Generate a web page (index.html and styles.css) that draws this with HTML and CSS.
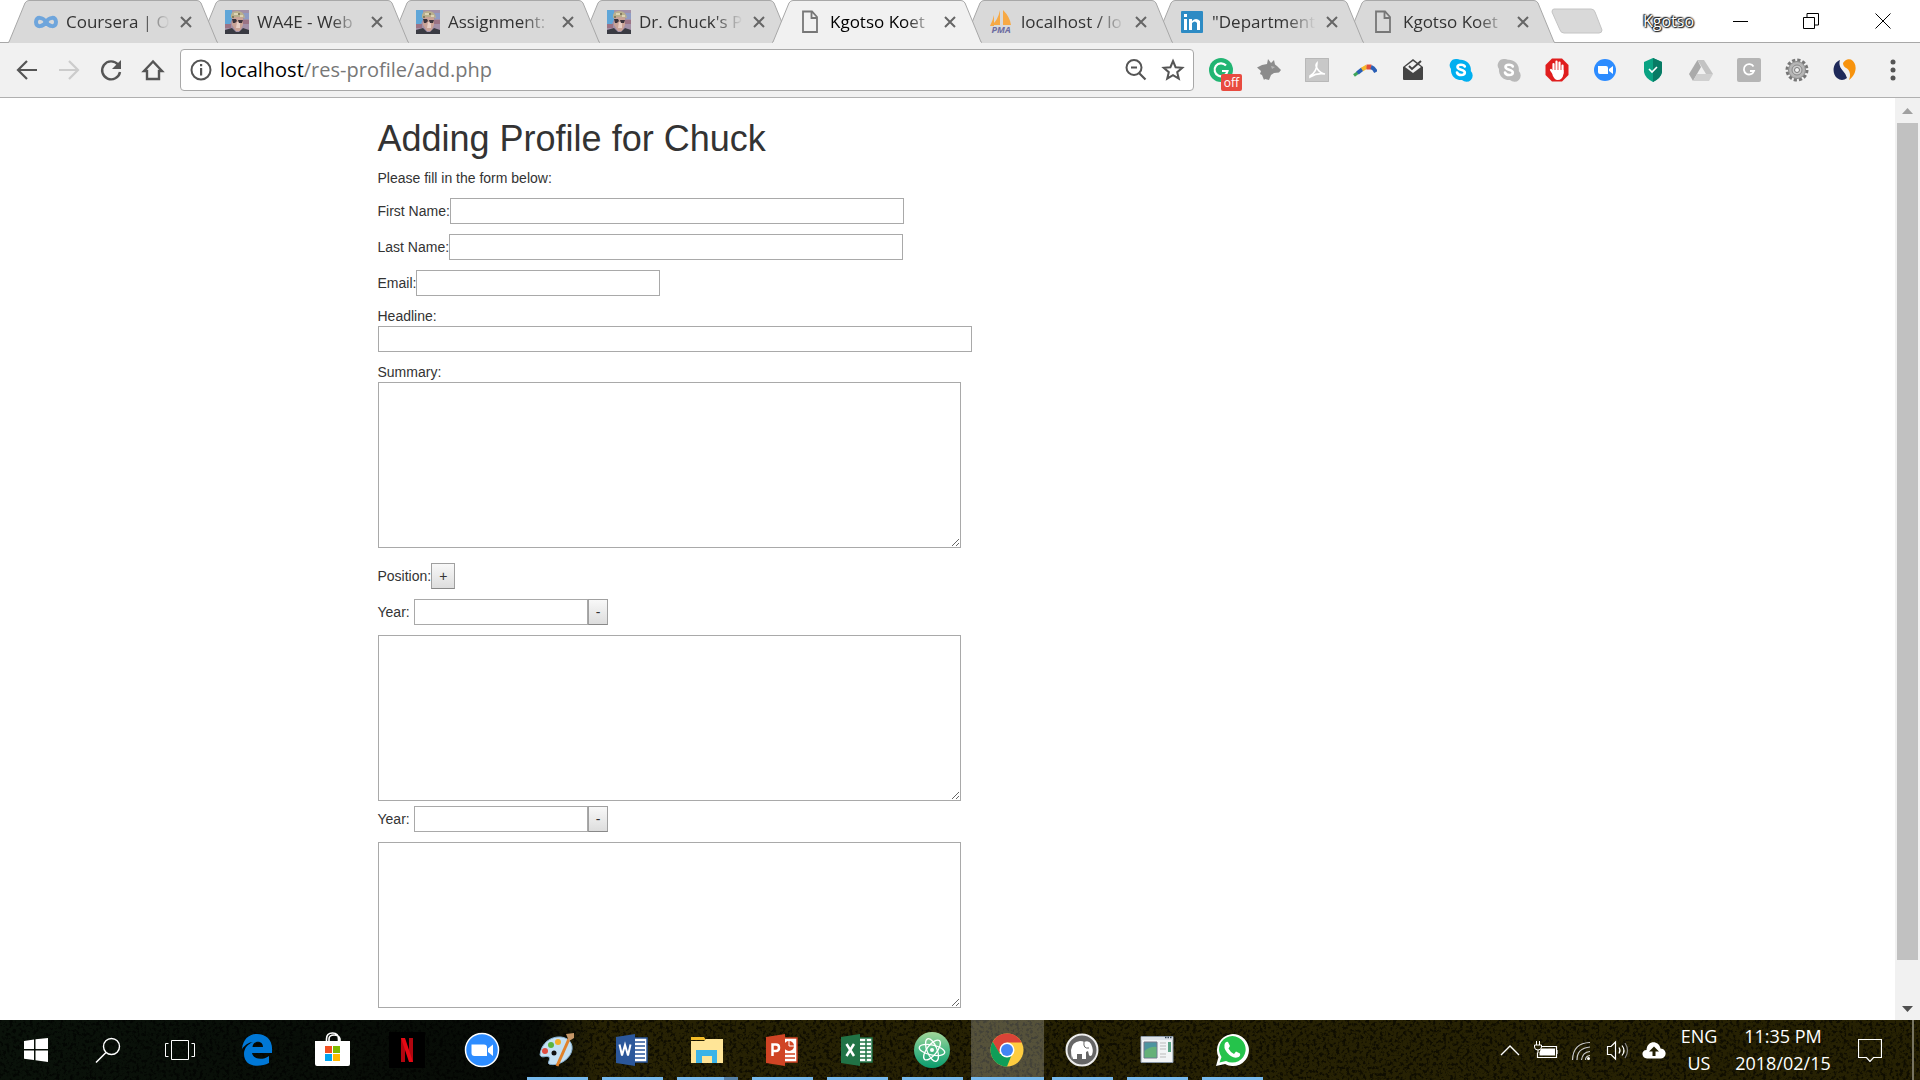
FILE: index.html
```html
<!DOCTYPE html>
<html lang="en">
<head>
<meta charset="utf-8">
<title>Kgotso Koetle</title>
<link rel="stylesheet" href="styles.css">
</head>
<body>
<svg class="defs" aria-hidden="true">
  <symbol id="tab-shape" viewBox="0 0 210 43" preserveAspectRatio="none">
    <path d="M0 43 L1 42 L17 3 Q18.500 .5 21 .5 L189 .5 Q191.500 .5 193 3 L209 42 L210 43Z" fill="currentColor"/>
    <path d="M0 42.500 L1 42 L17 3 Q18.500 .5 21 .5 L189 .5 Q191.500 .5 193 3 L209 42 L210 42.500" fill="none" stroke="#a8a8a8"/>
  </symbol>
  <symbol id="i-close" viewBox="0 0 14 14"><path d="M2 2l10 10M12 2L2 12" fill="none" stroke="currentColor" stroke-width="2"/></symbol>
  <symbol id="i-file" viewBox="0 0 24 24"><path d="M5 1.500h9l5 5.500v15H5z M13.500 2v6h5" fill="none" stroke="currentColor" stroke-width="1.800"/></symbol>
  <symbol id="i-chuck" viewBox="0 0 24 24">
    <path fill="#a391a8" d="M0 0h24v24H0z"/><path fill="#5fa6d8" d="M0 0h7v9l-2 5H0z"/><path fill="#8f9cc4" d="M18 3h6v6h-5z"/><path fill="#9b7385" d="M0 14h6v4H0zM18 10h6v4h-6z"/>
    <path fill="#c9a397" d="M7 7h11v8l-3 6h-4l-4-6z"/><path fill="#e6cdc4" d="M12 12h3v6h-4z"/><path fill="#b9b08d" d="M6 8q-1-7 6-7t8 7q-7-2-14 0z"/><path fill="#dcd4b4" d="M9 3h4v2H9zM15 5h3v2h-3z"/><path fill="#857c60" d="M7 6h2v2H7zM13 3h2v2h-2z"/>
    <path fill="#3c343c" d="M7 9h4l1 2-2 2H8zM13 10h5l-1 3h-3z"/>
    <path fill="#393a42" d="M0 24v-4l7-2 4 4h3l4-4 6 2v4z"/>
  </symbol>
  <symbol id="i-skype" viewBox="0 0 24 24"><path fill="currentColor" d="M7 1a6 6 0 0 1 4 .8A10 10 0 0 1 21.800 13 6.200 6.200 0 0 1 13 22 10 10 0 0 1 2 11 6.200 6.200 0 0 1 7 1z"/><path d="M15.800 8.500C15 6.300 8.500 6 8.500 9c0 3.300 7.300 2 7.300 5.500 0 3.300-6.800 3.300-7.800 0" fill="none" stroke="#fff" stroke-width="2.600" stroke-linecap="round"/></symbol>
</svg>

<header class="chrome">
  <div class="strip">
    <nav class="tabs" aria-label="Tabs">
      <div class="tab z8"><svg class="shape"><use href="#tab-shape"/></svg><svg class="fav" viewBox="0 0 24 24"><path d="M12 12C9 7 2 6 2 12s7 5 10 0 10-6 10 0-7 5-10 0z" fill="none" stroke="#6ea5dc" stroke-width="4"/></svg><a href="#coursera">Coursera | O</a><button class="close" aria-label="Close tab"><svg><use href="#i-close"/></svg></button></div>
      <div class="tab z7"><svg class="shape"><use href="#tab-shape"/></svg><svg class="fav"><use href="#i-chuck"/></svg><a href="#wa4e">WA4E - Web</a><button class="close" aria-label="Close tab"><svg><use href="#i-close"/></svg></button></div>
      <div class="tab z6"><svg class="shape"><use href="#tab-shape"/></svg><svg class="fav"><use href="#i-chuck"/></svg><a href="#assignment">Assignment:</a><button class="close" aria-label="Close tab"><svg><use href="#i-close"/></svg></button></div>
      <div class="tab z5"><svg class="shape"><use href="#tab-shape"/></svg><svg class="fav"><use href="#i-chuck"/></svg><a href="#chuck">Dr. Chuck's P</a><button class="close" aria-label="Close tab"><svg><use href="#i-close"/></svg></button></div>
      <div class="tab active"><svg class="shape"><use href="#tab-shape"/></svg><svg class="fav"><use href="#i-file"/></svg><a href="#add">Kgotso Koet</a><button class="close" aria-label="Close tab"><svg><use href="#i-close"/></svg></button></div>
      <div class="tab z3"><svg class="shape"><use href="#tab-shape"/></svg><svg class="fav" viewBox="0 0 24 24"><path fill="#f7a945" d="M11 0v15H3Q9 10 11 0zM14 0q7 7 8 15h-8zM1 16q3-6 4-11v11z"/><text x="12" y="23" text-anchor="middle" class="pma">PMA</text></svg><a href="#pma">localhost / lo</a><button class="close" aria-label="Close tab"><svg><use href="#i-close"/></svg></button></div>
      <div class="tab z2"><svg class="shape"><use href="#tab-shape"/></svg><svg class="fav" viewBox="0 0 24 24"><rect x="1" y="1" width="22" height="22" rx="1" fill="#2d8bc4"/><path fill="#fff" d="M4 9h3v11H4zM4 4h3v3H4zM9 9h3v2q4-4 8 0v9h-3v-7q-2-3-5 0v7H9z"/></svg><a href="#linkedin">"Department</a><button class="close" aria-label="Close tab"><svg><use href="#i-close"/></svg></button></div>
      <div class="tab z1"><svg class="shape"><use href="#tab-shape"/></svg><svg class="fav"><use href="#i-file"/></svg><a href="#other">Kgotso Koet</a><button class="close" aria-label="Close tab"><svg><use href="#i-close"/></svg></button></div>
    </nav>
    <button class="newtab" aria-label="New tab"><svg viewBox="0 0 52 26"><path d="M3 1h37q3 0 4 3l7 18q0 3-3 3H13q-3 0-4-3L1 4q0-3 2-3z" fill="#d9d9d9" stroke="#c4c4c4"/></svg></button>
    <div class="window">
      <span class="user">Kgotso</span>
      <button aria-label="Minimize"><svg viewBox="0 0 16 16"><path d="M0 8.500h15" stroke="#000"/></svg></button>
      <button aria-label="Restore"><svg viewBox="0 0 16 16"><path d="M.5 4.500h11v11H.5zM4 4V.5h11.500V12H12" fill="none" stroke="#000"/></svg></button>
      <button aria-label="Close"><svg viewBox="0 0 16 16"><path d="M.5.5l15 15M15.500.5l-15 15" stroke="#000"/></svg></button>
    </div>
  </div>
  <div class="toolbar">
    <div class="nav">
      <button aria-label="Back"><svg viewBox="0 0 24 24"><path d="M22 12H3M12 3l-9 9 9 9" fill="none" stroke="#555" stroke-width="2.200"/></svg></button>
      <button aria-label="Forward" disabled><svg viewBox="0 0 24 24"><path d="M2 12h19M12 3l9 9-9 9" fill="none" stroke="#ccc" stroke-width="2.200"/></svg></button>
      <button aria-label="Reload"><svg viewBox="0 0 24 24"><path d="M19 6.500A9 9 0 1 0 21 14" fill="none" stroke="#555" stroke-width="2.400"/><path d="M22 2v9h-9z" fill="#555"/></svg></button>
      <button aria-label="Home"><svg viewBox="0 0 24 24"><path d="M12 3.500L3 13h3v8h12v-8h3z" fill="none" stroke="#555" stroke-width="2.400"/></svg></button>
    </div>
    <div class="omnibox">
      <svg viewBox="0 0 24 24"><circle cx="12" cy="12" r="9.500" fill="none" stroke="#555" stroke-width="2"/><path d="M11 6h2.200v2.200H11zM11 10h2.200v7.500H11z" fill="#555"/></svg>
      <div class="url" role="textbox" aria-label="Address">localhost<span>/res-profile/add.php</span></div>
      <button aria-label="Zoom"><svg viewBox="0 0 24 24"><circle cx="10" cy="9.500" r="7.500" fill="none" stroke="#555" stroke-width="2"/><path d="M7 9.500h6M15 15l6.500 6.500" stroke="#555" stroke-width="2.200"/></svg></button>
      <button aria-label="Bookmark"><svg viewBox="0 0 24 24"><path d="M12 3l2.600 6.200 6.700.6-5.100 4.400 1.600 6.500L12 17.200l-5.800 3.500 1.600-6.500L2.700 9.800l6.700-.6z" fill="none" stroke="#555" stroke-width="2"/></svg></button>
    </div>
    <div class="exts">
      <button aria-label="Grammarly"><svg viewBox="0 0 24 24"><circle cx="12" cy="12" r="12" fill="#22b573"/><path d="M17 7.500A6.500 6.500 0 1 0 18.500 13H13" fill="none" stroke="#fff" stroke-width="2.200"/></svg><span class="badge">off</span></button>
      <button aria-label="Fox"><svg viewBox="0 0 24 24"><path fill="#8c8c8c" d="M0 9.500L5 7l5-1 1-5 3 4 3-3 1 4.500 2 1.500 4 4-2 2.500-5 .5-3 2-2 5-4-1-1 1-2-5-2-1 1-3z"/><path fill="#b5b5b5" d="M14 8l4 1-3 2z"/></svg></button>
      <button aria-label="Acrobat"><svg viewBox="0 0 24 24"><rect width="24" height="24" fill="#c8c8c8"/><path d="M5 18c5-3 7-8 7-13-3 3 2 10 8 11-5-1-10 0-15 3z" fill="none" stroke="#fff" stroke-width="1.600"/><path d="M.5.5h23v23H.5z" fill="none" stroke="#b8b8b8"/></svg></button>
      <button aria-label="Boomerang"><svg viewBox="0 0 24 24" fill="none" stroke-width="4"><path d="M1 17.500l4-3" stroke="#3da45a" stroke-width="3"/><path d="M4.500 15l5-4" stroke="#2a5fb5"/><path d="M9 11.500l5-3" stroke="#f6b92c"/><path d="M13.500 9h5" stroke="#e2503c" stroke-width="5"/><path d="M18 9q3 1 5 5" stroke="#2a5fb5"/></svg></button>
      <button aria-label="Inbox"><svg viewBox="0 0 24 24"><path fill="#444" d="M2 9L12 1l10 8v12q0 1-1 1H3q-1 0-1-1z"/><path fill="#f1f1f1" d="M4 9l8-6 8 6-8 6z"/><path d="M8 8l3 3 9-8" fill="none" stroke="#444" stroke-width="2"/></svg></button>
      <button class="blue" aria-label="Skype"><svg><use href="#i-skype"/></svg></button>
      <button class="gray" aria-label="Skype calling"><svg><use href="#i-skype"/></svg></button>
      <button aria-label="AdBlock"><svg viewBox="0 0 24 24"><path fill="#e01e1e" d="M7 .5h10L23.500 7v10L17 23.500H7L.5 17V7z"/><path d="M8.500 14V6M11.500 13V3.500M14.500 13V4.500M17.500 15V7.500M8 15l-2-3" stroke="#fff" stroke-width="2.200" stroke-linecap="round"/><path fill="#fff" d="M7.500 12h11v4q-1 6-6 6-3 0-5-5z"/></svg></button>
      <button aria-label="Zoom meetings"><svg viewBox="0 0 24 24"><circle cx="12" cy="12" r="11" fill="#2d8cff"/><path fill="#fff" d="M5 8h8q2 0 2 2v6H7q-2 0-2-2zM16 11l4-3v8l-4-3z"/></svg></button>
      <button aria-label="Kaspersky"><svg viewBox="0 0 24 24"><path fill="#0aa383" d="M12 0l9 4v10q-1 6-9 10-8-4-9-10V4z"/><path fill="#087b65" d="M12 0l9 4v10q-1 6-9 10z"/><path d="M8 11l3 3 5-5" fill="none" stroke="#fff" stroke-width="1.600"/></svg></button>
      <button aria-label="Drive"><svg viewBox="0 0 24 24"><path fill="#aaa" d="M8.500 2L0 16l4 7 8-14z"/><path fill="#c3c3c3" d="M8.500 2H15l9 14h-7z"/><path fill="#d0d0d0" d="M8 16h16l-4 7H4z"/></svg></button>
      <button aria-label="Google"><svg viewBox="0 0 24 24"><rect width="24" height="24" rx="2" fill="#b5b5b5"/><path d="M16.500 8.500A5.200 5.200 0 1 0 17 13h-4" fill="none" stroke="#fff" stroke-width="1.800"/></svg></button>
      <button aria-label="Settings gear"><svg viewBox="0 0 24 24"><circle cx="12" cy="12" r="10" fill="none" stroke="#777" stroke-width="3" stroke-dasharray="3.200 2.030"/><circle cx="12" cy="12" r="8.500" fill="#b5b5b5" stroke="#888"/><circle cx="12" cy="12" r="5" fill="#ccc" stroke="#888"/><circle cx="12" cy="12" r="2.500" fill="#f1f1f1" stroke="#777"/></svg></button>
      <button aria-label="SimilarWeb"><svg viewBox="0 0 24 24"><path fill="#1f2a5a" d="M7 2C-1 5-1 16 4 20q5 4 10 0-1-4-4-7-5-5-3-11z"/><path fill="#f7930d" d="M10 5q3-5 8-3.500c6 3 7 14-2 20.500 2-5 1-9-2-11.500q-4-2-4-5.500z"/></svg></button>
      <button aria-label="Menu"><svg viewBox="0 0 24 24" fill="#555"><circle cx="12" cy="4" r="2.500"/><circle cx="12" cy="12" r="2.500"/><circle cx="12" cy="20" r="2.500"/></svg></button>
    </div>
  </div>
</header>

<div class="viewport">
  <main class="page">
    <form class="container">
      <h1>Adding Profile for Chuck</h1>
      <p>Please fill in the form below:</p>
      <div class="row"><label for="fn">First Name:</label><input id="fn" class="name" type="text"></div>
      <div class="row"><label for="ln">Last Name:</label><input id="ln" class="name" type="text"></div>
      <div class="row"><label for="em">Email:</label><input id="em" class="email" type="text"></div>
      <div class="row stack"><label for="he">Headline:</label><input id="he" class="headline" type="text"></div>
      <div class="row stack last"><label for="su">Summary:</label><textarea id="su"></textarea></div>
      <div class="row"><label for="addPos">Position:</label><button type="button" id="addPos">+</button></div>
      <div class="position">
        <div class="row"><label class="year" for="y1">Year:</label><input id="y1" class="yearbox" type="text"><button type="button">-</button></div>
        <textarea aria-label="Description 1"></textarea>
      </div>
      <div class="position">
        <div class="row"><label class="year" for="y2">Year:</label><input id="y2" class="yearbox" type="text"><button type="button">-</button></div>
        <textarea aria-label="Description 2"></textarea>
      </div>
    </form>
  </main>
  <div class="scrollbar" aria-hidden="true">
    <svg viewBox="0 0 25 25"><path d="M7 16l5.500-6 5.500 6z" fill="#a0a0a0"/></svg>
    <div class="track"><div class="thumb"></div></div>
    <svg viewBox="0 0 25 25"><path d="M7 11l5.500 6 5.500-6z" fill="#505050"/></svg>
  </div>
</div>

<footer class="taskbar">
  <svg class="grain" aria-hidden="true"><filter id="grain"><feTurbulence type="fractalNoise" baseFrequency=".3" numOctaves="3" seed="4"/><feColorMatrix values="0 0 0 0 0  0 0 0 0 0  0 0 0 0 0  5 0 0 0 -2.400"/></filter><rect width="100%" height="100%" filter="url(#grain)"/></svg>
  <div class="system">
    <button aria-label="Start"><svg viewBox="0 0 36 36" fill="#fff"><path d="M6 9l10-1.500V17H6zM17.500 7.300L30 6v11H17.500zM6 18.500h10V28L6 26.700zM17.500 18.500H30V30l-12.500-1.700z"/></svg></button>
    <button aria-label="Search"><svg viewBox="0 0 36 36"><circle cx="21.500" cy="14.500" r="8" fill="none" stroke="#fff" stroke-width="1.400"/><path d="M16 20.500L6 30.500" stroke="#fff" stroke-width="1.600"/></svg></button>
    <button aria-label="Task view"><svg viewBox="0 0 36 36"><path d="M9.500 8.500h17v19h-17zM6.500 11.500h-3v13h3M29.500 11.500h3v13h-3" fill="none" stroke="#fff"/></svg></button>
  </div>
  <div class="apps">
    <button aria-label="Edge"><svg viewBox="0 0 36 36"><path fill="#0078d7" d="M3 17C4 7 10 2 18 2c9 0 16 6 15 17v2H13c1 6 10 8 17 3v7c-10 5-25 4-25-9 0-6 4-10 9-12-4 0-8 3-11 7zM13.500 15H24c0-7-10-7-10.500 0z"/></svg></button>
    <button aria-label="Store"><svg viewBox="0 0 36 36"><path fill="#fff" d="M1 9h35v23q0 2-2 2H3q-2 0-2-2z"/><path d="M12.500 10V7q0-6 6-6t6 6v3M15 10V7q0-4 5-4t6 4v3" fill="none" stroke="#fff" stroke-width="1.600"/><path fill="#f25022" d="M11 14h7v7h-7z"/><path fill="#7fba00" d="M19 14h7v7h-7z"/><path fill="#00a4ef" d="M11 22h7v7h-7z"/><path fill="#ffb900" d="M19 22h7v7h-7z"/></svg></button>
    <button aria-label="Netflix"><svg viewBox="0 0 36 36"><path fill="#000" d="M0 0h36v36H0z"/><path fill="#b1060f" d="M12 6h4v24h-4zM20 6h4v24h-4z"/><path fill="#e50914" d="M12 6h4l8 24h-4z"/></svg></button>
    <button aria-label="Zoom"><svg viewBox="0 0 36 36"><circle cx="18" cy="18" r="16.500" fill="#2d8cff" stroke="#fff" stroke-width="1.500"/><path fill="#fff" d="M7.500 12.500H20q3 0 3 3V24H10.500q-3 0-3-3zM24 16.500l5-4V24l-5-4z"/></svg></button>
    <button class="open" aria-label="Paint"><svg viewBox="0 0 36 36"><path fill="#c4e0f3" stroke="#87afd0" d="M1 23C2 11 12 4 22 5c10 1 14 10 9 18s-15 11-21 9c-2-1 2-5 0-7-3-2-7 2-9-2z"/><circle cx="15" cy="21" r="2.500" fill="#111"/><circle cx="6" cy="19" r="3" fill="#df4c3f"/><circle cx="12" cy="13" r="3" fill="#5cb43c"/><circle cx="19" cy="10" r="3" fill="#f5ae28"/><path d="M30 7L18 34" stroke="#e0812a" stroke-width="3"/><path fill="#c89868" d="M27 2l8-1v5l-5 3z"/></svg></button>
    <button class="open" aria-label="Word"><svg viewBox="0 0 36 36"><path fill="#fff" stroke="#2b579a" stroke-width="1.500" d="M18 6h15v24H18z"/><path d="M21 10h10M21 14h10M21 18h10M21 22h10M21 26h10" stroke="#2b579a" stroke-width="1.600"/><path fill="#2b579a" d="M2 5l19-3v32L2 31z"/><path d="M5.500 12.500l2.500 11 3-10.500 3 10.500 2.500-11" fill="none" stroke="#fff" stroke-width="2"/></svg></button>
    <button class="open more" aria-label="File Explorer"><svg viewBox="0 0 36 36"><path fill="#f4bd28" d="M2 5h13l2 3H2z"/><path fill="#ffe597" d="M2 9h13l2-2h17v24H2z"/><path fill="#3bb3e8" d="M7 18h21v13h-5v-7H13v7H7z"/></svg></button>
    <button class="open" aria-label="PowerPoint"><svg viewBox="0 0 36 36"><path fill="#fff" stroke="#d04424" stroke-width="1.500" d="M18 6h15v24H18z"/><circle cx="25" cy="14" r="5" fill="#d04424"/><path d="M25 14V9M25 14h5" stroke="#fff"/><path d="M21 22h10M21 26h10" stroke="#d04424" stroke-width="1.600"/><path fill="#d04424" d="M2 5l19-3v32L2 31z"/><path d="M8.500 24V12.500h3.500q3 0 3 3.200T12 19H9" fill="none" stroke="#fff" stroke-width="2.500"/></svg></button>
    <button class="open" aria-label="Excel"><svg viewBox="0 0 36 36"><path fill="#fff" stroke="#217346" stroke-width="1.500" d="M18 6h15v24H18z"/><path d="M21 10h11M21 14h11M21 18h11M21 22h11M21 26h11M27 7v22" stroke="#217346" stroke-width="1.500"/><path fill="#217346" d="M2 5l19-3v32L2 31z"/><path d="M7.500 12l7.500 12M15 12L7.500 24" stroke="#fff" stroke-width="2.500"/></svg></button>
    <button class="open" aria-label="Atom"><svg viewBox="0 0 36 36"><defs><linearGradient id="atom" x2="0" y2="1"><stop stop-color="#a3d69a"/><stop offset=".5" stop-color="#4dba85"/><stop offset="1" stop-color="#0a9b6c"/></linearGradient></defs><circle cx="18" cy="18" r="18" fill="url(#atom)"/><g fill="none" stroke="#fff" stroke-width="1.300"><ellipse cx="18" cy="18" rx="13" ry="5" transform="rotate(12 18 18)"/><ellipse cx="18" cy="18" rx="12" ry="5" transform="rotate(68 18 18)"/><ellipse cx="18" cy="18" rx="12" ry="5" transform="rotate(128 18 18)"/></g><circle cx="18" cy="18" r="2" fill="#fff"/></svg></button>
    <button class="open current" aria-label="Chrome"><svg viewBox="0 0 36 36"><circle cx="18" cy="18" r="16.500" fill="#ffcd40"/><path fill="#db4437" d="M3.700 9.800A16.500 16.500 0 0 1 32.700 10.500H18L10 21z"/><path fill="#0f9d58" d="M3.700 9.800L11 22l12 0-5 12.500A16.500 16.500 0 0 1 3.700 9.800z"/><circle cx="18" cy="18" r="7.500" fill="#fff"/><circle cx="18" cy="18" r="6" fill="#4285f4"/></svg></button>
    <button class="open" aria-label="MAMP"><svg viewBox="0 0 36 36"><circle cx="18" cy="18" r="15.500" fill="#666" stroke="#eee" stroke-width="2"/><path fill="#fff" d="M8 27q-1-5-1-9 1-8 9-9 3 0 4 1 5-2 7 2 3 6 1 11-2 2-3 0l-1-4-2 1v7h-4v-5h-5v5h-4v-3l-1 3z"/><path d="M20 10q-1 7 5 6" fill="none" stroke="#666"/></svg></button>
    <button class="open" aria-label="Window"><svg viewBox="0 0 36 36"><path fill="#f2f4f6" stroke="#8c99a8" d="M2 4.500h32v26H2z"/><path fill="#dde3ea" d="M2.500 5h31v3h-31z"/><path d="M26 5.500h7" stroke="#345" stroke-width="1.500" stroke-dasharray="1.500 1"/><path fill="#4d94a0" stroke="#778" d="M5 10h13v16H5z"/><path fill="#65b078" d="M5.500 19q6-5 12-4v10.500h-12z"/><path d="M21 11h6M21 14h6M21 17h6M21 22h6M21 25h6" stroke="#bbb"/><path fill="#5aa385" d="M29 10h3v10h-3z"/></svg></button>
    <button class="open" aria-label="WhatsApp"><svg viewBox="0 0 36 36"><path fill="#fff" d="M2 34l2.500-9A16 16 0 1 1 11 32z"/><path fill="#25c34b" d="M5.500 30.500L7.500 25A13.300 13.300 0 1 1 12 29z"/><path fill="#fff" d="M11 11q2-2 3-1l2 4-1.500 2.500q2 4 5.500 5.500l2-2.500 4 2q1 3-3 4-5 1-10-5-4-5-2-9.500z"/></svg></button>
  </div>
  <div class="tray">
    <button aria-label="Show hidden icons"><svg viewBox="0 0 24 24"><path d="M3 17l9-9 9 9" fill="none" stroke="#fff" stroke-width="1.400"/></svg></button>
    <button aria-label="Battery"><svg viewBox="0 0 24 24"><path d="M5 8.500h17.500v11H3.500v-5M23 12v4" fill="none" stroke="#fff" stroke-width="1.200"/><path fill="#fff" d="M7 10.500h14v7H5.500v-3z"/><path d="M2.500 3v4M5.500 3v4M.5 7h7v2q0 3-3.500 3T.5 9zM4 12v3" fill="#231f03" stroke="#fff"/></svg></button>
    <button aria-label="Network"><svg viewBox="0 0 24 24" fill="none" stroke="#ccc" stroke-width="1.200"><path d="M2.500 22Q3 5 20 4.500M7 22Q7 10 20 9M11.500 22q1-8 8.500-8.500M15.500 22q0-4 4.500-4.500"/><circle cx="18.500" cy="20.500" r="1.500" fill="#fff" stroke="none"/></svg></button>
    <button aria-label="Volume"><svg viewBox="0 0 24 24" fill="none" stroke="#fff" stroke-width="1.200"><path d="M1.500 8.500H5L9.500 4v17L5 16.500H1.500zM13 9.500q2 3 0 6M16 7.500q4 5 0 10"/><path d="M19 5q5 7.500 0 15" stroke="#888"/></svg></button>
    <button aria-label="Sync"><svg viewBox="0 0 24 24"><path fill="#fff" d="M5 20.500C-1 20-1 12 4.500 12 5 2 17 2 18.500 10.500 25.500 11 25 20 19 20.500z"/><path fill="#231f03" d="M12 8.500l5 5h-3.500V18h-3v-4.500H7z"/></svg></button>
    <div class="lang">ENG<br>US</div>
    <div class="clock">11:35 PM<br>2018/02/15</div>
    <button aria-label="Notifications"><svg viewBox="0 0 24 24"><path d="M.5 1.500h23v18h-8L12 23.500l-3.500-4h-8z" fill="none" stroke="#fff" stroke-width="1.200"/></svg></button>
    <div class="peek"></div>
  </div>
</footer>
</body>
</html>
```
FILE: styles.css
```css
* { box-sizing: border-box; }
body {
  margin: 0;
  height: 100vh;
  display: flex;
  flex-direction: column;
  overflow: hidden;
  background: #fff;
  font-family: "Open Sans", "Noto Sans", sans-serif;
}
button { font: inherit; color: inherit; padding: 0; border: 0; background: none; }
svg { display: block; flex: none; }
.defs { position: absolute; width: 0; height: 0; }

/* Tab strip */
.strip { display: flex; height: 43px; padding-left: 8px; border-bottom: 1px solid #a8a8a8; }
.tabs { display: flex; flex: 0 1 1528px; min-width: 0; height: 43px; }
.tab {
  position: relative;
  display: flex;
  align-items: center;
  flex: 0 1 210px;
  min-width: 0;
  margin-right: -19px;
  padding: 0 22px 0 26px;
  color: #d9d9d9;
}
.shape { position: absolute; inset: 0; width: 100%; height: 100%; }
.fav { position: relative; width: 24px; height: 24px; margin-right: 8px; color: #777; overflow: visible; }
.pma { font: italic bold 9px "Open Sans", sans-serif; fill: #6c6ca0; }
.tab a {
  position: relative;
  flex: 1;
  min-width: 0;
  overflow: hidden;
  white-space: nowrap;
  font-size: 17px;
  line-height: 24px;
  color: #333;
  text-decoration: none;
  mask-image: linear-gradient(90deg, #000 70%, transparent 98%);
}
.close { position: relative; margin-left: 4px; padding: 0 3px; color: #666; }
.close svg { width: 14px; height: 14px; }
.z8 { z-index: 8; } .z7 { z-index: 7; } .z6 { z-index: 6; } .z5 { z-index: 5; }
.z3 { z-index: 3; } .z2 { z-index: 2; } .z1 { z-index: 1; }
.active { z-index: 9; color: #f1f1f1; }
.active a { color: #000; }
.newtab { flex: none; margin-left: 15px; }
.newtab svg { width: 52px; height: 26px; }
.window { display: flex; align-items: center; margin-left: auto; height: 41px; }
.user {
  margin-right: 12px;
  font-size: 16px;
  line-height: 24px;
  color: #fff;
  text-shadow: 0 0 2px #000, 0 0 2px #000, 1px 1px 1px #333, -1px -1px 1px #333;
}
.window button { width: 70px; display: grid; place-items: center; }
.window button:last-child { width: 74px; }
.window svg { width: 16px; height: 16px; }

/* Toolbar */
.toolbar { display: flex; align-items: center; height: 55px; background: #f1f1f1; border-bottom: 1px solid #b0b0b0; padding: 0 3px 0 6px; }
.nav { display: flex; }
.nav button { width: 42px; height: 42px; display: grid; place-items: center; }
.nav svg, .omnibox svg, .exts svg { width: 24px; height: 24px; }
.omnibox {
  display: flex;
  align-items: center;
  flex: 1;
  gap: 13px;
  height: 42px;
  margin: 0 3px 0 6px;
  padding: 0 8px;
  border: 1px solid #a8a8a8;
  border-radius: 4px;
  background: #fff;
}
.url { flex: 1; margin-left: -6px; font-size: 20px; line-height: 28px; color: #000; }
.url span { color: #777; }
.exts { display: flex; }
.exts button { position: relative; width: 48px; height: 42px; display: grid; place-items: center; }
.badge { position: absolute; left: 24px; top: 25px; width: 21px; height: 17px; border-radius: 2px; background: #e84b40; color: #fff; font-size: 12px; line-height: 17px; }
.blue { color: #00aff0; }
.gray { color: #b9b9b9; }

/* Page */
.viewport { flex: 1; min-height: 0; display: flex; }
.page { flex: 1; overflow: hidden; font: 14px/20px "Liberation Sans", Arial, sans-serif; color: #333; }
.container { max-width: 1170px; margin: 0 auto; padding: 0 15px; }
h1 { margin: 21px 0 9px; font-size: 36px; line-height: 40px; font-weight: 400; }
p { margin: 0 0 10px; }
.row { display: flex; align-items: center; margin-bottom: 10px; }
.stack { flex-direction: column; align-items: flex-start; }
.last { margin-bottom: 15px; }
.container input, .container textarea {
  display: block;
  margin: 0;
  max-width: 100%;
  padding: 2px;
  border: 1px solid #a9a9a9;
  border-radius: 0;
  background: #fff;
  font: inherit;
}
.container input { height: 26px; }
.container textarea { width: 583px; height: 166px; }
.name { width: 454px; }
.email { width: 244px; }
.headline { width: 594px; }
.yearbox { width: 174px; }
.year { margin-right: 4px; }
.container button {
  height: 26px;
  padding: 0 7px;
  border: 1px solid #a0a0a0;
  border-bottom-color: #888;
  background: linear-gradient(#f8f8f8, #ddd);
  line-height: 20px;
}
.position { margin-bottom: 5px; }

.scrollbar { display: flex; flex-direction: column; width: 25px; background: #f1f1f1; }
.scrollbar svg { width: 25px; height: 25px; }
.track { flex: 1; padding: 0 2px; }
.thumb { height: 96%; background: #c1c1c1; }

/* Taskbar */
.taskbar {
  position: relative;
  display: flex;
  flex: none;
  height: 60px;
  background: linear-gradient(90deg, #0a120a 0, #070b06 28%, #272204 31%, #262103 100%);
  color: #fff;
}
.grain { position: absolute; inset: 0; width: 100%; height: 100%; opacity: .6; }
.system, .apps, .tray { position: relative; display: flex; }
.system button { width: 72px; }
.apps { gap: 2px; margin-left: 5px; }
.apps button { width: 73px; }
.system button, .apps button { display: grid; place-items: center; }
.system svg, .apps svg { width: 36px; height: 36px; }
.apps svg { margin-right: 1px; }
.open { background: linear-gradient(#76b9ed, #76b9ed) center bottom / 61px 3px no-repeat; }
.more { background-image: linear-gradient(90deg, #76b9ed 47px, #5580a5 47px); }
.current { background: linear-gradient(#76b9ed, #76b9ed) center bottom / 73px 3px no-repeat, rgba(255, 255, 255, .22); }
.tray { margin-left: auto; align-items: center; }
.tray button { width: 36px; display: grid; place-items: center; }
.tray svg { width: 24px; height: 24px; }
.lang, .clock { font-size: 18px; line-height: 27px; text-align: center; }
.lang { width: 54px; }
.clock { width: 114px; margin-right: 12px; }
.peek { width: 8px; height: 60px; margin-left: 24px; border-left: 2px solid #777461; }
```
